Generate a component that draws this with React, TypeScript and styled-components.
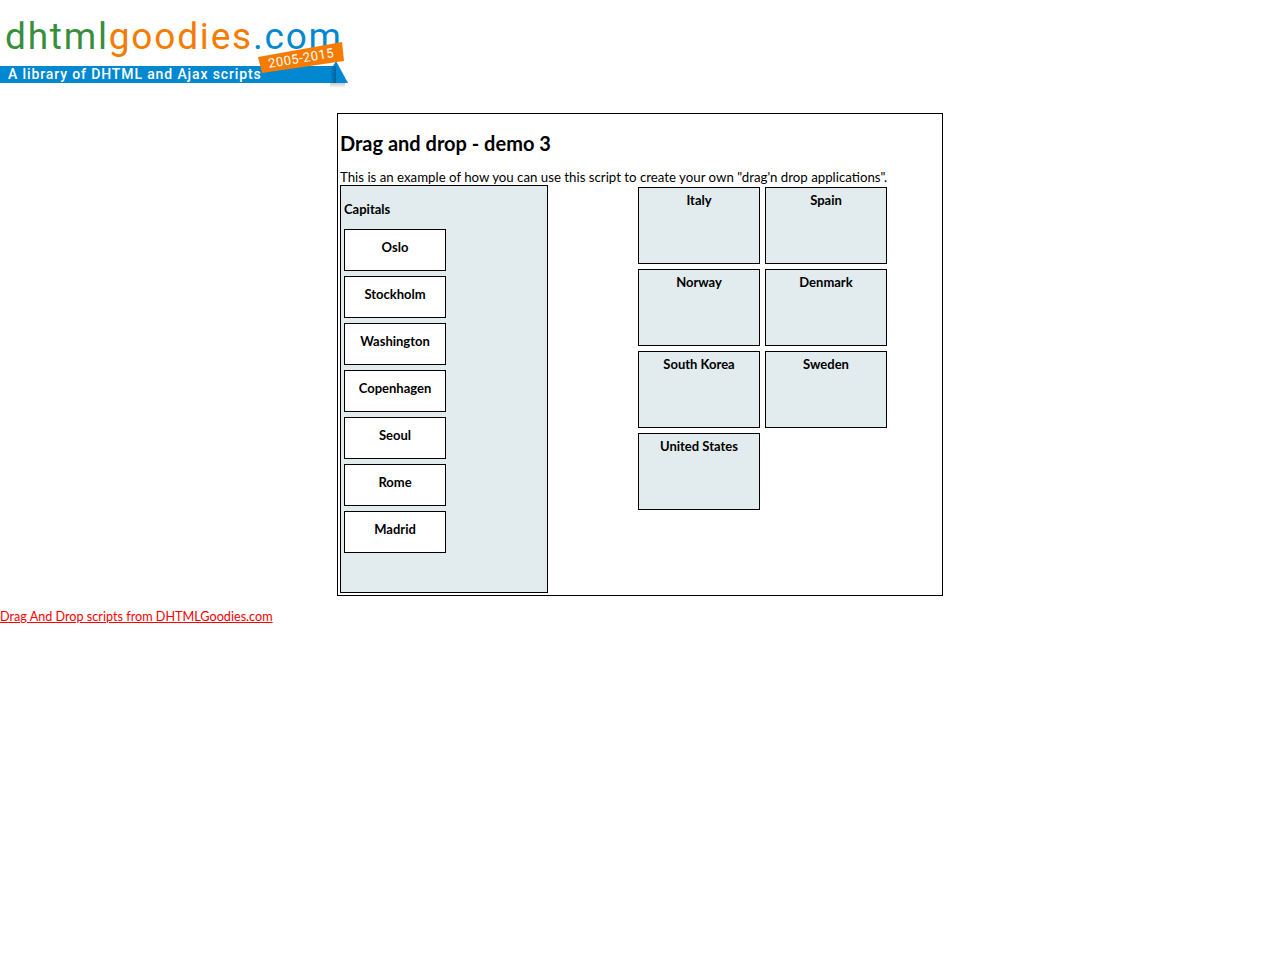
import React from 'react';
import styled, { createGlobalStyle } from 'styled-components';

const fontStack = `Lato, "Open Sans", "Liberation Sans", sans-serif`;

const GlobalStyle = createGlobalStyle`
  html, body {
    background: #fff;
    color: #000;
    font-family: ${fontStack};
    font-size: 14px;
    margin: 0;
    padding: 0;
  }
`;

const Header = styled.header`
  height: 113px;
`;

const LogoSvg = styled.svg`
  display: block;
`;

const MainContainer = styled.main`
  border: 1px solid #000;
  box-sizing: border-box;
  height: 483px;
  margin: 0 auto;
  padding: 0 2px;
  width: 606px;
`;

const Title = styled.h1`
  font-size: 20px;
  font-weight: 700;
  line-height: 24px;
  margin: 17px 0 0;
`;

const Intro = styled.p`
  font-size: 13.25px;
  line-height: 17px;
  margin: 14px 0 0;
  white-space: nowrap;
`;

const Workspace = styled.div`
  display: flex;
  margin-top: -1px;
`;

const CapitalsPanel = styled.section`
  background: #e2ebed;
  border: 1px solid #000;
  box-sizing: border-box;
  height: 408px;
  padding: 15px 3px 0;
  width: 208px;
`;

const PanelTitle = styled.div`
  font-size: 13px;
  font-weight: 700;
  line-height: 17px;
  margin-bottom: 11px;
`;

const CapitalList = styled.div`
  display: flex;
  flex-direction: column;
  gap: 5px;
`;

const Capital = styled.div`
  background: #fff;
  border: 1px solid #000;
  box-sizing: border-box;
  font-size: 13px;
  font-weight: 700;
  height: 42px;
  line-height: 17px;
  padding-top: 9px;
  text-align: center;
  width: 102px;
`;

const CountryGrid = styled.section`
  align-content: start;
  display: grid;
  gap: 5px;
  grid-auto-rows: 77px;
  grid-template-columns: 122px 122px;
  margin: 2px 0 0 90px;
`;

const Country = styled.div`
  background: #e2ebed;
  border: 1px solid #000;
  box-sizing: border-box;
  font-size: 13px;
  font-weight: 700;
  line-height: 17px;
  padding-top: 4px;
  text-align: center;
`;

const FooterLink = styled.a`
  color: #f00;
  display: block;
  font-size: 12.65px;
  line-height: 17px;
  margin-top: 12px;
  text-decoration: underline;
  width: fit-content;
`;

const capitals = ['Oslo', 'Stockholm', 'Washington', 'Copenhagen', 'Seoul', 'Rome', 'Madrid'];
const countries = ['Italy', 'Spain', 'Norway', 'Denmark', 'South Korea', 'Sweden', 'United States'];

function Logo() {
  return (
    <LogoSvg width={352} height={92} viewBox={'0 0 352 92'}>
      <defs>
        <linearGradient id={'foldShade'} x1={'0'} x2={'1'} y1={'0'} y2={'0'}>
          <stop offset={'0'} stopColor={'#0288d1'} />
          <stop offset={'1'} stopColor={'#01609a'} />
        </linearGradient>
        <linearGradient id={'foldDrop'} x1={'0'} x2={'0'} y1={'0'} y2={'1'}>
          <stop offset={'0'} stopColor={'#c8c8c8'} />
          <stop offset={'1'} stopColor={'#ffffff'} />
        </linearGradient>
      </defs>
      <text
        x={5}
        y={49}
        fontFamily={'Roboto, sans-serif'}
        fontSize={37}
        fontWeight={450}
        letterSpacing={1.8}
      >
        <tspan fill={'#388e3c'}>{'dhtml'}</tspan>
        <tspan fill={'#f57c00'}>{'goodies'}</tspan>
        <tspan fill={'#0288d1'}>{'.com'}</tspan>
      </text>
      <rect x={0} y={66} width={336} height={17} fill={'#0288d1'} />
      <rect x={330} y={83} width={15} height={5} fill={'url(#foldDrop)'} />
      <polygon points={'336,61 348,83 333,83 333,66'} fill={'#0288d1'} />
      <rect x={330} y={66} width={6} height={17} fill={'url(#foldShade)'} />
      <text
        x={8}
        y={79}
        fill={'#fff'}
        fontFamily={'Roboto, sans-serif'}
        fontSize={14}
        fontWeight={500}
        letterSpacing={0.88}
      >
        {'A library of DHTML and Ajax scripts'}
      </text>
      <polygon points={'258,57 342,42 344,61 262,73'} fill={'#f57c00'} />
      <text
        x={269}
        y={68}
        fill={'#fff'}
        fontFamily={'Roboto, sans-serif'}
        fontSize={13}
        letterSpacing={0.5}
        transform={'rotate(-9.5 269 68)'}
      >
        {'2005-2015'}
      </text>
    </LogoSvg>
  );
}

export default function App() {
  return (
    <>
      <GlobalStyle />
      <Header>
        <Logo />
      </Header>

      <MainContainer>
        <Title>{'Drag and drop - demo 3'}</Title>
        <Intro>
          {'This is an example of how you can use this script to create your own "drag\'n drop applications".'}
        </Intro>

        <Workspace>
          <CapitalsPanel>
            <PanelTitle>{'Capitals'}</PanelTitle>
            <CapitalList>
              {capitals.map(name => (
                <Capital key={name}>{name}</Capital>
              ))}
            </CapitalList>
          </CapitalsPanel>

          <CountryGrid>
            {countries.map(name => (
              <Country key={name}>{name}</Country>
            ))}
          </CountryGrid>
        </Workspace>
      </MainContainer>

      <FooterLink href={'#'}>{'Drag And Drop scripts from DHTMLGoodies.com'}</FooterLink>
    </>
  );
}
